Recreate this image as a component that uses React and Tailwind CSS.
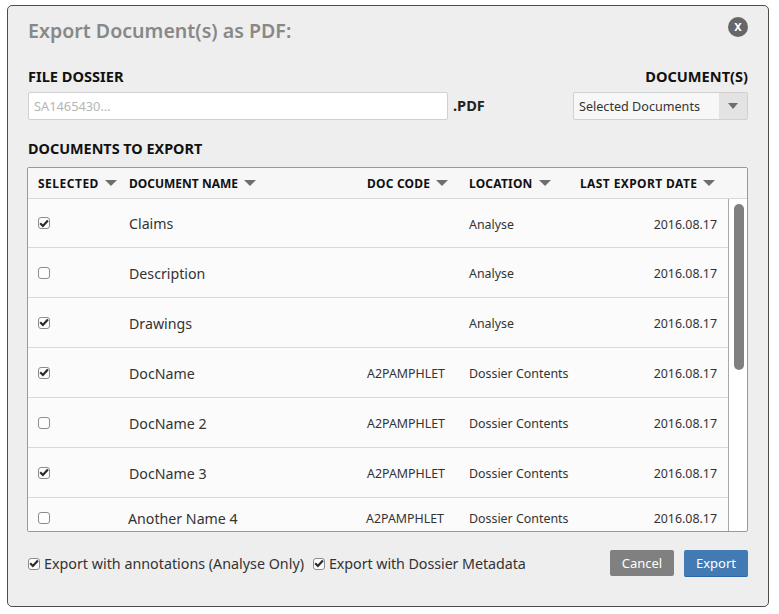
const font = { fontFamily: '"Noto Sans", sans-serif' };

const rows = [
  { checked: true, name: "Claims", code: "", location: "Analyse" },
  { checked: false, name: "Description", code: "", location: "Analyse" },
  { checked: true, name: "Drawings", code: "", location: "Analyse" },
  { checked: true, name: "DocName", code: "A2PAMPHLET", location: "Dossier Contents" },
  { checked: false, name: "DocName 2", code: "A2PAMPHLET", location: "Dossier Contents" },
  { checked: true, name: "DocName 3", code: "A2PAMPHLET", location: "Dossier Contents" },
];

function Caret({ width = 12, height = 6 }) {
  return (
    <svg width={width} height={height} viewBox="0 0 12 6" preserveAspectRatio="none">
      <path d="M0 0h12L6 6z" fill="#6e6e6e" />
    </svg>
  );
}

function Check({ checked }) {
  return (
    <span className="flex h-[12px] w-[12px] shrink-0 items-center justify-center rounded-[3px] border border-[#8c8c8c] bg-[#fdfdfd]">
      {checked && (
        <svg width="10" height="9" viewBox="0 0 10 9">
          <path d="M1.2 4.3 3.9 7l5-5.6" fill="none" stroke="#2b2b2b" strokeWidth="2.2" />
        </svg>
      )}
    </span>
  );
}

function HeadCell({ label, className }) {
  return (
    <div className={`flex items-center gap-[6px] text-[12px] font-bold text-[#111] ${className}`}>
      <span className="pt-[2px]">{label}</span>
      <Caret />
    </div>
  );
}

function Row({ row }) {
  return (
    <div className="flex h-[50px] items-center border-b border-[#d9d9d9] bg-[#fbfbfb] first:h-[49px]">
      <div className="w-[101px] pl-[10px]">
        <Check checked={row.checked} />
      </div>
      <div className="w-[238px] pt-[2px] text-[14.2px] text-[#333]">{row.name}</div>
      <div className="w-[102px] pt-[4px] text-[12.4px] text-[#333]">{row.code}</div>
      <div className="w-[120px] pt-[4px] text-[12.4px] text-[#333]">{row.location}</div>
      <div className="w-[128px] pt-[4px] text-right text-[12.4px] text-[#333]">2016.08.17</div>
    </div>
  );
}

export default function App() {
  return (
    <div style={font} className="h-[614px] w-[779px] bg-white pl-[7px] pt-[5px]">
      <div className="relative h-[602px] w-[762px] rounded-[5px] border border-[#4d4d4d] bg-[#eeeeee] px-[20px]">
        <div className="absolute right-[20px] top-[11px] flex h-[20px] w-[20px] items-center justify-center rounded-full bg-[#666] text-[11px] font-bold text-white">
          X
        </div>
        <h1 className="pt-[9px] text-[19.6px] font-semibold leading-[32px] text-[#888]">
          Export Document(s) as PDF:
        </h1>
        <div className="mt-[18px] flex justify-between">
          <div>
            <div className="mb-[5px] text-[14.6px] font-bold leading-[22px] text-[#111]">FILE DOSSIER</div>
            <div className="flex items-center">
              <div className="flex h-[28px] w-[420px] items-center rounded-[2px] border border-[#d0d0d0] bg-white px-[5px] pt-[2px] text-[12.8px] text-[#b5b5b5]">
                SA1465430…
              </div>
              <span className="ml-[5px] text-[14.6px] font-bold text-[#222]">.PDF</span>
            </div>
          </div>
          <div className="flex flex-col items-end">
            <div className="mb-[5px] text-[14.6px] font-bold leading-[22px] text-[#111]">DOCUMENT(S)</div>
            <div className="flex h-[28px] w-[175px] rounded-[2px] border border-[#d0d0d0] bg-[#f7f7f7]">
              <div className="flex flex-1 items-center pl-[5px] pt-[2px] text-[12.6px] text-[#333]">Selected Documents</div>
              <div className="flex w-[28px] items-center justify-center bg-[#e3e3e3]">
                <Caret width={10} height={6} />
              </div>
            </div>
          </div>
        </div>
        <div className="mt-[18px] text-[14.4px] font-bold leading-[22px] text-[#111]">DOCUMENTS TO EXPORT</div>
        <div className="-ml-px mt-[7px] h-[365px] w-[721px] overflow-hidden rounded-[2px] border border-[#999] bg-white">
          <div className="flex h-[31px] items-center border-b border-[#d9d9d9] bg-[#f7f7f7]">
            <HeadCell label="SELECTED" className="w-[101px] pl-[10px] tracking-[0.5px]" />
            <HeadCell label="DOCUMENT NAME" className="w-[238px]" />
            <HeadCell label="DOC CODE" className="w-[102px] tracking-[0.2px]" />
            <HeadCell label="LOCATION" className="w-[111px] tracking-[0.2px]" />
            <HeadCell label="LAST EXPORT DATE" className="w-[150px] tracking-[0.4px]" />
          </div>
          <div className="relative flex">
            <div className="w-[701px] border-r border-[#a8a8a8]">
              {rows.map((row) => (
                <Row key={row.name} row={row} />
              ))}
              <div className="flex h-[34px] items-start bg-[#fbfbfb] pt-[10px] leading-[20px]">
                <div className="flex h-[20px] w-[100px] items-center pl-[10px]">
                  <Check checked={false} />
                </div>
                <div className="w-[238px] pt-[1px] text-[14.2px] text-[#333]">Another Name 4</div>
                <div className="w-[103px] pt-[1px] text-[12.4px] text-[#333]">A2PAMPHLET</div>
                <div className="w-[120px] pt-[1px] text-[12.4px] text-[#333]">Dossier Contents</div>
                <div className="w-[128px] pt-[1px] text-right text-[12.4px] text-[#333]">2016.08.17</div>
              </div>
            </div>
            <div className="absolute right-[3px] top-[5px] h-[166px] w-[10px] rounded-full bg-[#808080]" />
          </div>
        </div>
        <div className="mt-[18px] flex items-center justify-between">
          <div className="flex items-center text-[14.3px] text-[#333]">
            <Check checked />
            <span className="ml-[4px]">Export with annotations (Analyse Only)</span>
            <span className="ml-[9px]">
              <Check checked />
            </span>
            <span className="ml-[4px] tracking-[-0.07px]">Export with Dossier Metadata</span>
          </div>
          <div className="flex gap-[10px]">
            <button className="h-[26px] w-[64px] rounded-[2px] bg-[#808080] pt-[1px] text-[13px] text-white">Cancel</button>
            <button className="h-[27px] w-[64px] rounded-[2px] border-b border-[#2a66a8] bg-[#427ab4] pt-[1px] text-[13px] text-white">Export</button>
          </div>
        </div>
      </div>
    </div>
  );
}
